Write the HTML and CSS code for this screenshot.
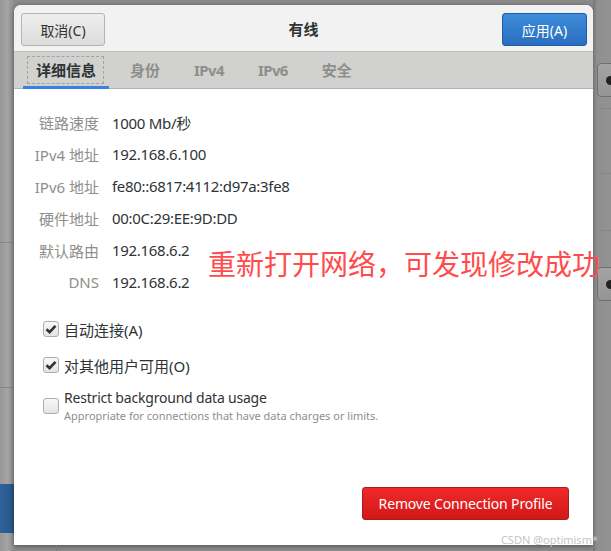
FILE: index.html
```html
<!DOCTYPE html>
<html lang="zh">
<head>
    <meta charset="UTF-8">
    <title>有线</title>
    <link rel="stylesheet" href="styles.css">
</head>
<body>
    <div class="screen">
        <div class="side-left">
            <div class="side-line line-a"></div>
            <div class="side-line line-b"></div>
            <div class="side-blue"></div>
        </div>

        <div class="dialog-col">
            <div class="dialog">
                <div class="header">
                    <button class="btn btn-default">取消(C)</button>
                    <div class="title">有线</div>
                    <button class="btn btn-primary">应用(A)</button>
                </div>

                <div class="tabs">
                    <div class="tab active"><span class="focus">详细信息</span></div>
                    <div class="tab">身份</div>
                    <div class="tab latin">IPv4</div>
                    <div class="tab latin">IPv6</div>
                    <div class="tab">安全</div>
                </div>

                <div class="content">
                    <div class="details">
                        <div class="label">链路速度</div><div class="value">1000 Mb/秒</div>
                        <div class="label">IPv4 地址</div><div class="value">192.168.6.100</div>
                        <div class="label">IPv6 地址</div><div class="value">fe80::6817:4112:d97a:3fe8</div>
                        <div class="label">硬件地址</div><div class="value">00:0C:29:EE:9D:DD</div>
                        <div class="label">默认路由</div><div class="value">192.168.6.2</div>
                        <div class="label">DNS</div><div class="value">192.168.6.2</div>
                    </div>

                    <div class="options">
                        <label class="option opt-auto">
                            <span class="check checked">
                                <svg width="12" height="12" viewBox="0 0 12 12"><polyline points="1.5,6.2 4.6,9.2 10.5,2.8" fill="none" stroke="#2e3436" stroke-width="2.6"/></svg>
                            </span>
                            <span>自动连接(A)</span>
                        </label>
                        <label class="option opt-all">
                            <span class="check checked">
                                <svg width="12" height="12" viewBox="0 0 12 12"><polyline points="1.5,6.2 4.6,9.2 10.5,2.8" fill="none" stroke="#2e3436" stroke-width="2.6"/></svg>
                            </span>
                            <span>对其他用户可用(O)</span>
                        </label>
                        <label class="option opt-restrict">
                            <span class="check"></span>
                            <span class="opt-text">
                                <span class="opt-title">Restrict background data usage</span>
                                <span class="opt-sub">Appropriate for connections that have data charges or limits.</span>
                            </span>
                        </label>
                    </div>

                    <div class="footer">
                        <button class="btn btn-danger">Remove Connection Profile</button>
                    </div>
                </div>
            </div>
        </div>

        <div class="side-right">
            <div class="side-line r-a"></div>
            <div class="side-btn r-btn1"><span class="gear"></span></div>
            <div class="side-line r-b"></div>
            <div class="side-line r-c"></div>
            <div class="side-btn r-btn2"><span class="gear"></span></div>
        </div>
    </div>

    <div class="note">重新打开网络，可发现修改成功</div>
    <div class="mark">CSDN @optimism*</div>
</body>
</html>
```

FILE: styles.css
```css
body {
    margin: 0;
    width: 611px;
    height: 551px;
    overflow: hidden;
    background: #8b8b8b;
    font-family: "Noto Sans", "Noto Sans CJK SC", sans-serif;
    color: #2e3436;
    position: relative;
}
.screen {
    display: flex;
    height: 551px;
}
.side-left {
    width: 14px;
    flex-shrink: 0;
    position: relative;
    background: linear-gradient(to right, #979797, #a5a5a5 50%, #8e8e8e);
}
.side-line {
    position: absolute;
    left: 0;
    right: 0;
    height: 1px;
    background: #878787;
}
.line-a { top: 242px; }
.line-b { top: 387px; }
.side-blue {
    position: absolute;
    left: 0;
    right: 0;
    top: 484px;
    height: 49px;
    background: linear-gradient(to right, #2f639b, #28578a);
}
.dialog-col {
    width: 579px;
    flex-shrink: 0;
    padding-top: 5px;
    position: relative;
}
.dialog-col::after {
    content: "";
    position: absolute;
    left: 42px;
    bottom: 0;
    width: 1px;
    height: 6px;
    background: #7a7a7a;
}
.dialog {
    height: 540px;
    background: #fff;
    border-radius: 7px 7px 0 0;
    box-shadow: 0 1px 5px rgba(0, 0, 0, 0.45);
    display: flex;
    flex-direction: column;
    overflow: hidden;
}
.header {
    height: 47px;
    box-sizing: border-box;
    background: #f2f2f2;
    border-bottom: 1px solid #bdbdbb;
    display: flex;
    align-items: flex-start;
    justify-content: space-between;
    padding: 8px 6px 0 7px;
}
.title {
    font-size: 15px;
    font-weight: bold;
    line-height: 32px;
    color: #2e3436;
}
.btn {
    font-family: "Noto Sans", "Noto Sans CJK SC", sans-serif;
    font-size: 14px;
    height: 33px;
    border-radius: 3px;
    padding: 0;
    cursor: pointer;
}
.btn-default {
    width: 84px;
    color: #2e3436;
    background: linear-gradient(#eeeeed, #dcdcda);
    border: 1px solid #b4b4b1;
}
.btn-primary {
    width: 85px;
    color: #fff;
    background: linear-gradient(#3d8ddb, #2a6dbe);
    border: 1px solid #1d5ba5;
}
.btn-danger {
    width: 207px;
    color: #fff;
    background: linear-gradient(#ef2929, #d51717);
    border: 1px solid #a51d1d;
    letter-spacing: -0.15px;
}
.tabs {
    height: 37px;
    box-sizing: border-box;
    background: #d1d1cf;
    border-bottom: 1px solid #b4b4b1;
    display: flex;
    gap: 8px;
    padding-left: 9px;
}
.tab {
    padding: 0 13px;
    font-size: 15px;
    font-weight: bold;
    line-height: 36px;
    color: #8d8f8b;
    position: relative;
}
.tab.latin {
    letter-spacing: -0.6px;
}
.tab.active {
    color: #2e3436;
}
.tab.active::after {
    content: "";
    position: absolute;
    left: 0;
    right: 0;
    bottom: -1px;
    height: 3px;
    background: #3584e4;
}
.focus::before {
    content: "";
    position: absolute;
    left: 4px;
    right: 5px;
    top: 4px;
    bottom: 4px;
    border: 1px dashed #a2a29f;
}
.content {
    flex: 1;
    display: flex;
    flex-direction: column;
}
.details {
    display: grid;
    grid-template-columns: 85px auto;
    column-gap: 13px;
    grid-auto-rows: 32px;
    padding-top: 17px;
    font-size: 15px;
    align-items: center;
}
.label {
    text-align: right;
    color: #8d8f8b;
}
.value {
    color: #2e3436;
    letter-spacing: -0.3px;
}
.options {
    padding-left: 29px;
    display: flex;
    flex-direction: column;
    font-size: 15px;
}
.option {
    display: flex;
    align-items: center;
    gap: 5px;
    min-height: 24px;
}
.opt-auto { margin-top: 19px; }
.opt-all { margin-top: 12px; }
.opt-restrict { margin-top: 11px; gap: 5px; }
.check {
    width: 14px;
    height: 14px;
    border: 1px solid #adadaa;
    border-radius: 3px;
    background: linear-gradient(#f8f8f7, #e4e4e2);
    display: flex;
    align-items: center;
    justify-content: center;
    flex-shrink: 0;
}
.opt-text {
    display: flex;
    flex-direction: column;
}
.opt-title {
    font-size: 14px;
    line-height: 20px;
    letter-spacing: -0.2px;
}
.opt-sub {
    font-size: 11px;
    line-height: 16px;
    color: #8d8f8b;
}
.footer {
    margin-top: auto;
    display: flex;
    justify-content: flex-end;
    padding: 0 24px 25px 0;
}
.side-right {
    flex: 1;
    position: relative;
    background: linear-gradient(to right, #747474, #8f8f8f 4px, #939393);
}
.r-a { top: 108px; left: 4px; }
.r-b { top: 173px; left: 4px; }
.r-c { top: 230px; left: 4px; }
.side-btn {
    position: absolute;
    left: 4px;
    width: 30px;
    height: 34px;
    box-sizing: border-box;
    border: 1px solid #6f6f6f;
    border-radius: 4px;
    background: linear-gradient(#a3a3a3, #959595);
}
.r-btn1 { top: 63px; }
.r-btn2 { top: 267px; }
.gear {
    position: absolute;
    left: 8px;
    top: 12px;
    width: 9px;
    height: 9px;
    border-radius: 50%;
    background: #222;
}
.note {
    position: absolute;
    left: 208px;
    top: 249px;
    font-size: 28px;
    line-height: 28px;
    color: #ff4b4b;
    font-family: "Noto Sans CJK SC", sans-serif;
    white-space: nowrap;
}
.mark {
    position: absolute;
    right: 13px;
    top: 532px;
    font-size: 11px;
    color: #c4c4c4;
    white-space: nowrap;
}
```
